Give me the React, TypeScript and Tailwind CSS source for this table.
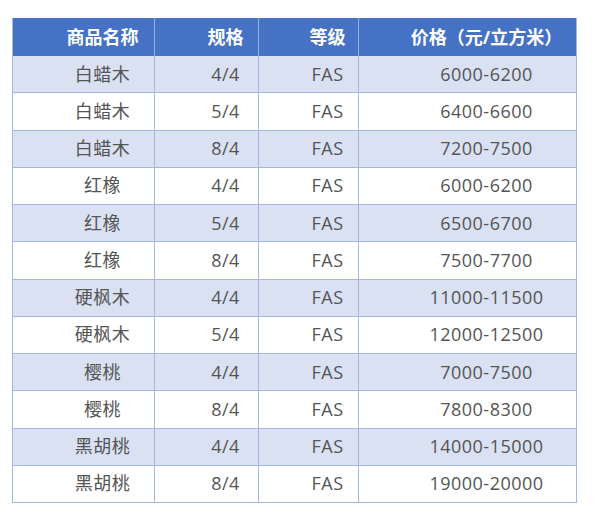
const rows: [string, string, string, string][] = [
  ["白蜡木", "4/4", "FAS", "6000-6200"],
  ["白蜡木", "5/4", "FAS", "6400-6600"],
  ["白蜡木", "8/4", "FAS", "7200-7500"],
  ["红橡", "4/4", "FAS", "6000-6200"],
  ["红橡", "5/4", "FAS", "6500-6700"],
  ["红橡", "8/4", "FAS", "7500-7700"],
  ["硬枫木", "4/4", "FAS", "11000-11500"],
  ["硬枫木", "5/4", "FAS", "12000-12500"],
  ["樱桃", "4/4", "FAS", "7000-7500"],
  ["樱桃", "8/4", "FAS", "7800-8300"],
  ["黑胡桃", "4/4", "FAS", "14000-15000"],
  ["黑胡桃", "8/4", "FAS", "19000-20000"],
];

const headers = ["商品名称", "规格", "等级", "价格（元/立方米）"];

export default function App() {
  return (
    <div className="w-[600px] h-[527px] bg-white pt-[18px] pl-[12px] font-['Open_Sans','Noto_Sans_CJK_SC',sans-serif]">
      <div className="w-[564px] grid grid-cols-[142px_104px_100px_218px] border-l border-[#a3b8e0]">
        {headers.map((h, i) => (
          <div
            key={h}
            className={`h-[38px] bg-[#4672c6] text-white font-bold text-[18px] flex items-center justify-center pl-[38px] border-[#93aedf] ${i < 3 ? "border-r" : "border-r border-r-[#a3b8e0]"}`}
          >
            {h}
          </div>
        ))}
        {rows.map((r, ri) =>
          r.map((c, ci) => (
            <div
              key={ri + "-" + ci}
              className={`h-[37.25px] flex items-center justify-center pl-[38px] text-[18px] tracking-[0.5px] text-[#555555] border-r border-b border-[#a3b8e0] ${ri % 2 === 0 ? "bg-[#d9e1f2]" : "bg-white"}`}
            >
              {c}
            </div>
          ))
        )}
      </div>
    </div>
  );
}
